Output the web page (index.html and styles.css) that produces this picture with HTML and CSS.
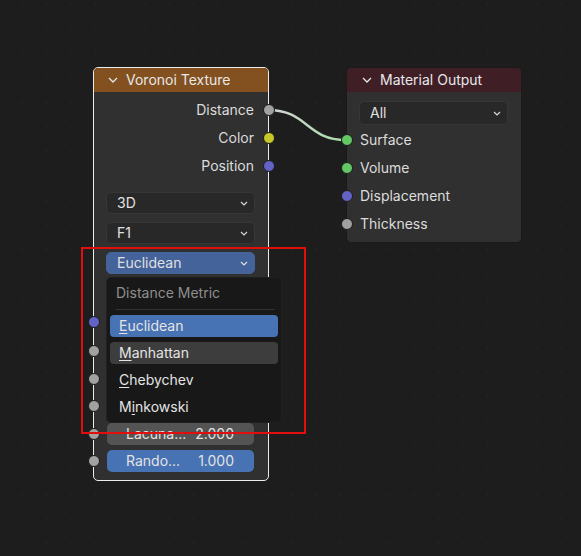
FILE: index.html
```html
<!DOCTYPE html>
<html>
<head>
<meta charset="utf-8">
<link rel="stylesheet" href="styles.css">
</head>
<body>
<div class="canvas">
  <svg class="links" width="581" height="556" viewBox="0 0 581 556">
    <defs>
      <linearGradient id="lg" gradientUnits="userSpaceOnUse" x1="268" y1="0" x2="346" y2="0">
        <stop offset="0" stop-color="#d4d4d4"/>
        <stop offset="1" stop-color="#a8dca8"/>
      </linearGradient>
    </defs>
    <path d="M268 110 C 308 110, 306 140, 346 140" fill="none" stroke="url(#lg)" stroke-width="2.4"/>
  </svg>

  <div class="node voronoi">
    <div class="header header-tex">
      <svg class="chev" width="10" height="6" viewBox="0 0 10 6"><path d="M1 1 L5 5 L9 1" fill="none" stroke="#e6e6e6" stroke-width="1.3"/></svg>
      <span>Voronoi Texture</span>
    </div>
    <div class="body">
      <div class="outputs">
        <div class="out-row"><span>Distance</span><i class="sock right gray"></i></div>
        <div class="out-row"><span>Color</span><i class="sock right yellow"></i></div>
        <div class="out-row"><span>Position</span><i class="sock right purple"></i></div>
      </div>
      <div class="props">
        <div class="dropdown"><span>3D</span><svg class="dchev" width="8" height="5" viewBox="0 0 8 5"><path d="M1 1 L4 4 L7 1" fill="none" stroke="#d8d8d8" stroke-width="1.2"/></svg></div>
        <div class="dropdown"><span>F1</span><svg class="dchev" width="8" height="5" viewBox="0 0 8 5"><path d="M1 1 L4 4 L7 1" fill="none" stroke="#d8d8d8" stroke-width="1.2"/></svg></div>
        <div class="dropdown open"><span>Euclidean</span><svg class="dchev" width="8" height="5" viewBox="0 0 8 5"><path d="M1 1 L4 4 L7 1" fill="none" stroke="#e0e0e0" stroke-width="1.2"/></svg></div>
      </div>
      <div class="inputs">
        <div class="in-label"><i class="sock left purple"></i></div>
        <div class="in-row"><i class="sock left gray"></i><div class="field"></div></div>
        <div class="in-row"><i class="sock left gray"></i><div class="field"></div></div>
        <div class="in-row"><i class="sock left gray"></i><div class="field"></div></div>
        <div class="in-row"><i class="sock left gray"></i><div class="field"><span>Lacuna...</span><span>2.000</span></div></div>
        <div class="in-row"><i class="sock left gray"></i><div class="field blue"><span>Rando...</span><span>1.000</span></div></div>
      </div>
    </div>
  </div>

  <div class="node output">
    <div class="header header-out">
      <svg class="chev" width="10" height="6" viewBox="0 0 10 6"><path d="M1 1 L5 5 L9 1" fill="none" stroke="#e6e6e6" stroke-width="1.3"/></svg>
      <span>Material Output</span>
    </div>
    <div class="body">
      <div class="dropdown all"><span>All</span><svg class="dchev" width="8" height="5" viewBox="0 0 8 5"><path d="M1 1 L4 4 L7 1" fill="none" stroke="#d8d8d8" stroke-width="1.2"/></svg></div>
      <div class="in-list">
        <div class="out-in"><i class="sock left green"></i><span>Surface</span></div>
        <div class="out-in"><i class="sock left green"></i><span>Volume</span></div>
        <div class="out-in"><i class="sock left purple"></i><span>Displacement</span></div>
        <div class="out-in"><i class="sock left gray"></i><span>Thickness</span></div>
      </div>
    </div>
  </div>

  <div class="menu">
    <div class="menu-title">Distance Metric</div>
    <div class="menu-sep"></div>
    <div class="menu-items">
      <div class="item active"><u>E</u>uclidean</div>
      <div class="item hover"><u>M</u>anhattan</div>
      <div class="item"><u>C</u>hebychev</div>
      <div class="item">M<u>i</u>nkowski</div>
    </div>
  </div>

  <div class="redbox"></div>
</div>
</body>
</html>
```

FILE: styles.css
```css
* { box-sizing: border-box; }
html, body {
  margin: 0;
  padding: 0;
  background: #1d1d1d;
}
body {
  font-family: Inter, "DejaVu Sans", sans-serif;
  font-size: 14px;
  color: #dddddd;
}
.canvas {
  position: relative;
  width: 581px;
  height: 556px;
  overflow: hidden;
  background-color: #1d1d1d;
  background-image: radial-gradient(circle, #222222 0.9px, transparent 1.3px);
  background-size: 24.5px 24.5px;
  background-position: 9.75px -7.75px;
}
.links {
  position: absolute;
  left: 0;
  top: 0;
}
.node {
  position: absolute;
  top: 67px;
  background: #303030;
  border-radius: 5px;
}
.voronoi {
  left: 93px;
  width: 176px;
  border: 1px solid #ececec;
}
.output {
  left: 346px;
  width: 176px;
  border: 1px solid #1a1a1a;
}
.header {
  height: 24px;
  display: flex;
  align-items: center;
  border-radius: 4px 4px 0 0;
  color: #e8e8e8;
  padding-left: 14px;
  padding-bottom: 1px;
  gap: 8px;
}
.header-tex { background: #83501f; }
.header-out { background: #3f1e26; }
.output .header { padding-left: 15px; }
.chev { flex: none; margin-top: 1px; }

.voronoi .body {
  padding-top: 4px;
  padding-bottom: 8px;
}
.out-row {
  position: relative;
  height: 28px;
  display: flex;
  align-items: center;
  justify-content: flex-end;
  padding-right: 14px;
  padding-bottom: 2px;
  color: #dcdcdc;
}
.sock {
  position: absolute;
  top: 50%;
  width: 12px;
  height: 12px;
  margin-top: -6px;
  border-radius: 50%;
  border: 1px solid #1c1c1c;
}
.sock.right { right: -6.5px; }
.sock.left { left: -6.5px; }
.gray { background: #a1a1a1; }
.yellow { background: #c7c729; }
.purple { background: #6363c7; }
.green { background: #63c763; }

.props {
  margin-top: 12px;
  display: flex;
  flex-direction: column;
  gap: 8px;
  padding: 0 13px 0 12px;
}
.dropdown {
  height: 22px;
  display: flex;
  align-items: center;
  justify-content: space-between;
  padding: 0 6px 1px 10px;
  background: #282828;
  border: 1px solid #363636;
  border-radius: 5px;
  color: #e0e0e0;
}
.dropdown.open {
  background: #43639a;
  border-color: #43639a;
}
.dchev { flex: none; margin-top: 1px; }

.inputs {
  margin-top: 34px;
}
.in-label {
  position: relative;
  height: 28px;
}
.in-row {
  position: relative;
  height: 22px;
  margin-top: 5.5px;
  padding: 0 14px 0 13px;
}
.in-label + .in-row { margin-top: 4px; }
.field {
  height: 22px;
  display: flex;
  align-items: center;
  justify-content: space-between;
  padding: 0 20px 1px 19px;
  background: #545454;
  border-radius: 5px;
  color: #e2e2e2;
}
.field.blue { background: #4772b3; }

.output .body {
  padding-bottom: 4px;
}
.dropdown.all {
  height: 24px;
  margin: 9px 13px 0 12px;
}
.in-list { margin-top: 1px; }
.out-in {
  position: relative;
  height: 28px;
  display: flex;
  align-items: center;
  padding-left: 13px;
  padding-bottom: 2px;
  color: #dcdcdc;
}

.menu {
  position: absolute;
  left: 106px;
  top: 277px;
  width: 176px;
  height: 146px;
  background: #181818;
  border: 1px solid #202020;
  border-radius: 5px;
  padding-top: 2px;
}
.menu-title {
  height: 26px;
  display: flex;
  align-items: center;
  padding-left: 9px;
  padding-bottom: 2px;
  color: #8e8e8e;
}
.menu-sep {
  height: 1px;
  margin: 3px 6px 0 9px;
  background: #333333;
}
.menu-items {
  margin-top: 5px;
  display: flex;
  flex-direction: column;
  gap: 5px;
  padding: 0 3px;
}
.item {
  height: 22px;
  display: flex;
  align-items: center;
  padding-left: 9px;
  padding-bottom: 1px;
  border-radius: 4px;
  color: #e4e4e4;
}
.item u { text-decoration-thickness: 1px; text-underline-offset: 2px; }
.item.active { background: #4772b3; }
.item.hover { background: #3d3d3d; }

.redbox {
  position: absolute;
  left: 81px;
  top: 247px;
  width: 225px;
  height: 187px;
  border: 2px solid #e20d0d;
}
```
